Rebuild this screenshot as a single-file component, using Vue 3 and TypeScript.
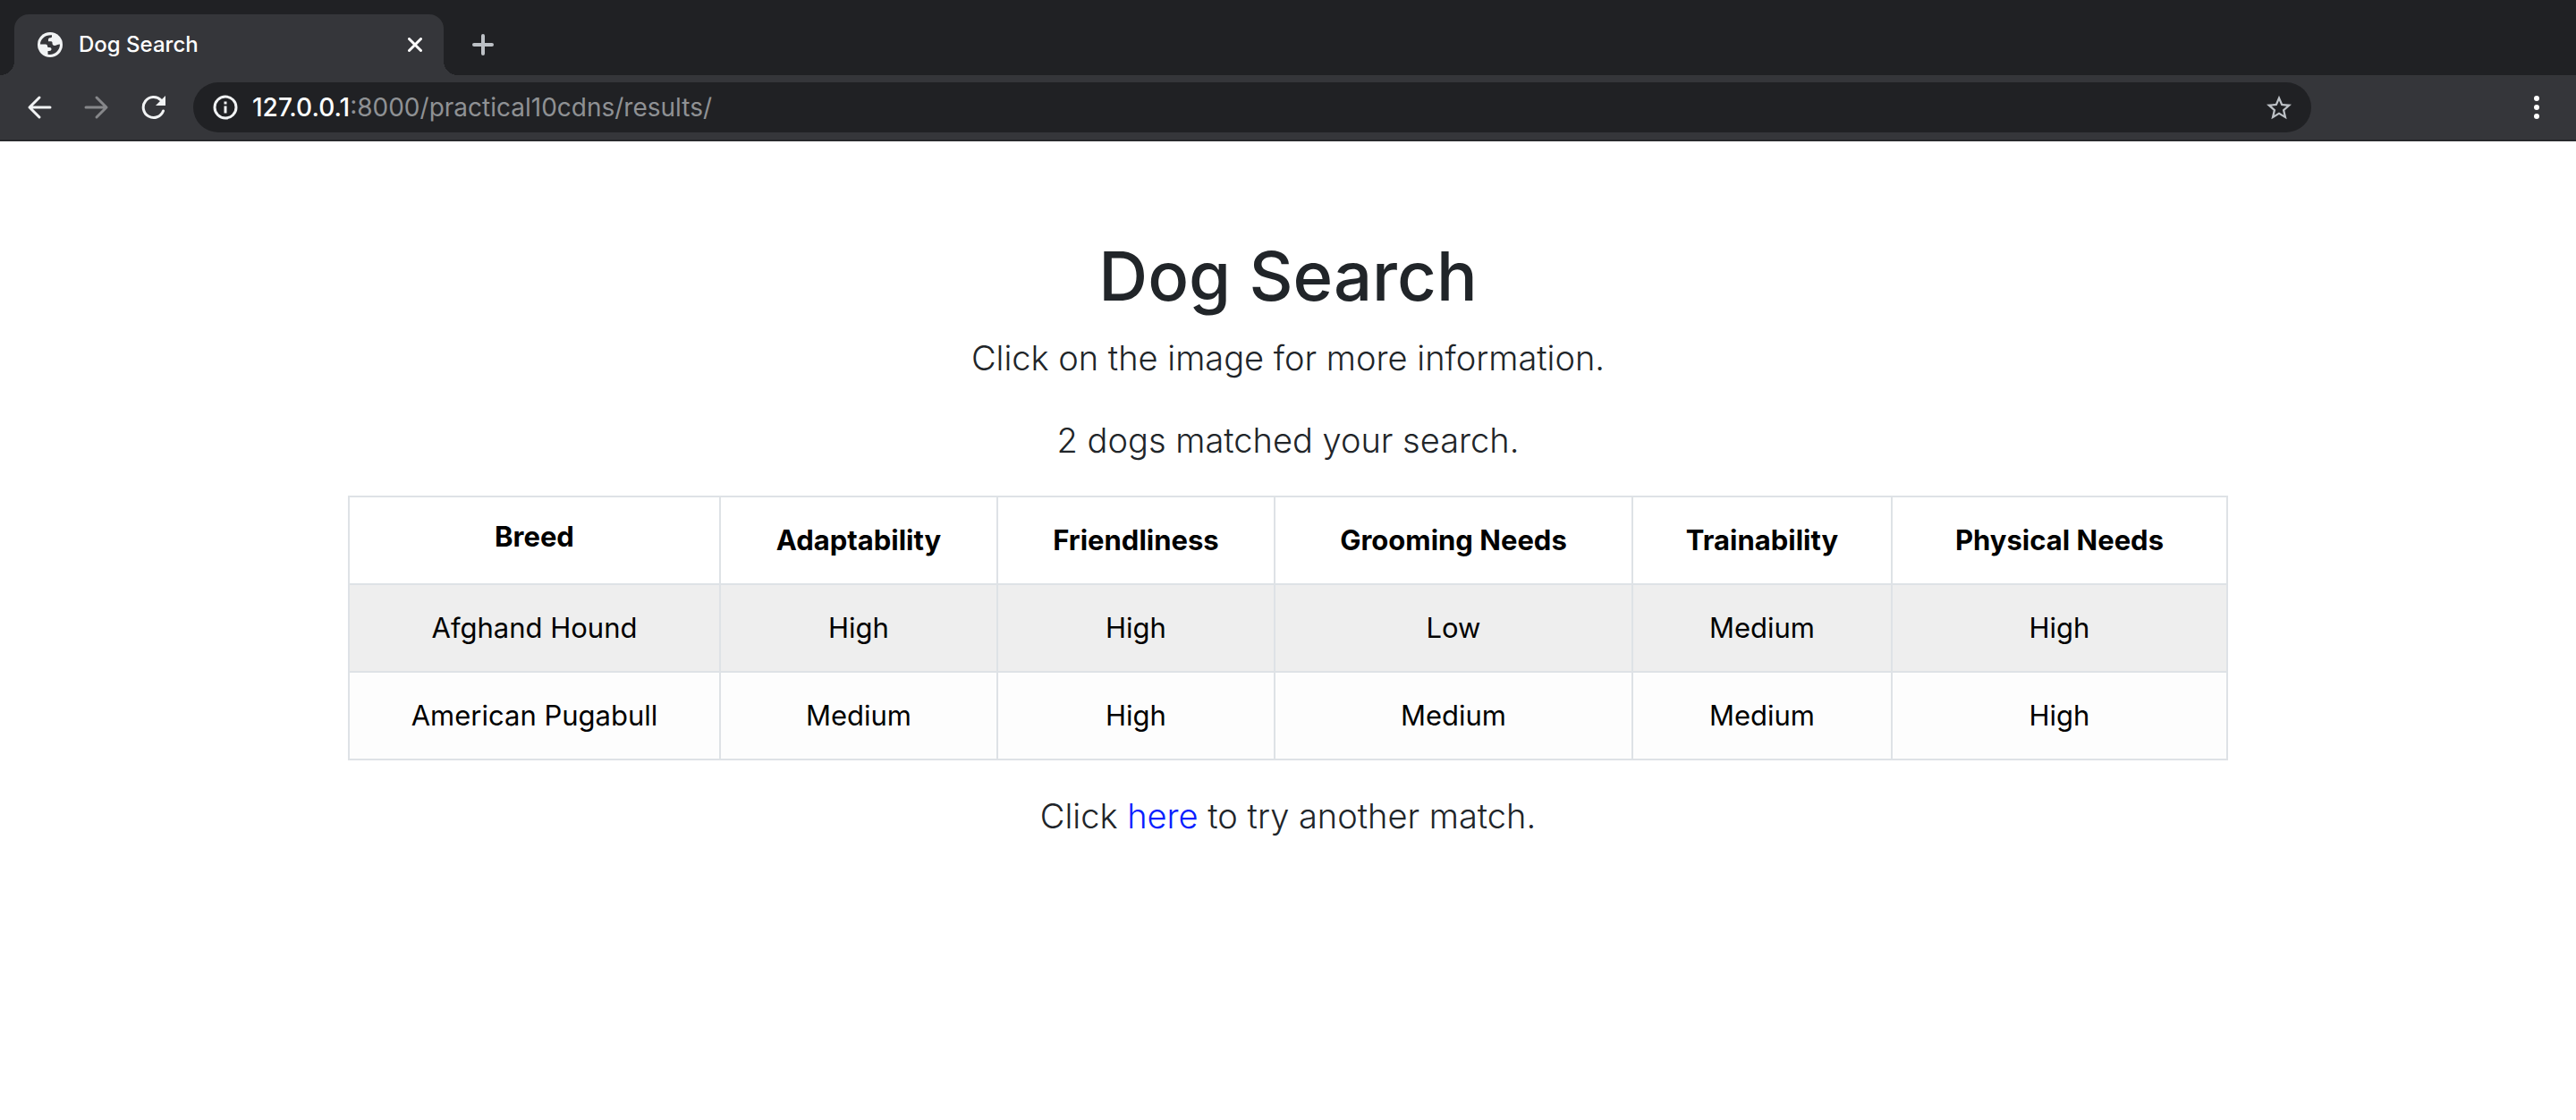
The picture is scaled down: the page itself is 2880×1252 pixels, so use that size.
<script setup lang="ts">
interface Dog {
  breed: string
  traits: string[]
}

const columns: string[] = [
  'Breed',
  'Adaptability',
  'Friendliness',
  'Grooming Needs',
  'Trainability',
  'Physical Needs',
]

const dogs: Dog[] = [
  { breed: 'Afghand Hound', traits: ['High', 'High', 'Low', 'Medium', 'High'] },
  { breed: 'American Pugabull', traits: ['Medium', 'High', 'Medium', 'Medium', 'High'] },
]
</script>

<template>
  <div class="browser">
    <header>
      <div class="tab-strip">
        <div class="tab">
          <svg class="favicon" viewBox="0 0 28 28" aria-hidden="true">
            <circle cx="14" cy="14" r="14" fill="#f1f3f4" />
            <path
              d="M3 13.500C3 8 8 2.800 16 3.200v1.600c0 1-1 1.500-2 1.500c-1.500 0-2 1-2 2v2h3c1.500 0 1.500 1 1.500 2c0 1.700 1 2.700 2.500 2.700c2 0 3-1.500 6-1.500c0 7-6 12.500-13.500 11.200V21H13c1.500 0 2.500-.8 2.500-2c0-1.300-.8-2-2-2h-1c-1 0-1.500-.6-1.500-1.500c0-1.300-.7-2-2-2z"
              fill="#35363a"
            />
          </svg>
          <span class="tab-title">Dog Search</span>
          <button class="icon-button close" type="button" aria-label="Close tab">
            <svg viewBox="0 0 16 16"><path d="M1.500 1.500l13 13M14.500 1.500l-13 13" stroke="#fff" stroke-width="3" stroke-linecap="round" /></svg>
          </button>
        </div>
        <button class="icon-button new-tab" type="button" aria-label="New tab">
          <svg viewBox="0 0 24 24"><path d="M12 2v20M2 12h20" stroke="#bdc1c6" stroke-width="4" stroke-linecap="round" /></svg>
        </button>
      </div>

      <nav class="toolbar" aria-label="Browser toolbar">
        <button class="icon-button" type="button" aria-label="Back">
          <svg viewBox="0 0 28 28" fill="none" stroke="#f1f3f4" stroke-width="3" stroke-linecap="round" stroke-linejoin="round"><path d="M14 3L3 14l11 11M3 14h23" /></svg>
        </button>
        <button class="icon-button" type="button" aria-label="Forward" disabled>
          <svg viewBox="0 0 28 28" fill="none" stroke="#86878a" stroke-width="3" stroke-linecap="round" stroke-linejoin="round"><path d="M14 3l11 11l-11 11M25 14H2" /></svg>
        </button>
        <button class="icon-button" type="button" aria-label="Reload">
          <svg viewBox="0 0 28 28"><path d="M24.500 18A11.500 11.500 0 1 1 22 6" fill="none" stroke="#f1f3f4" stroke-width="3" stroke-linecap="round" /><path d="M27 1v11H16z" fill="#f1f3f4" /></svg>
        </button>
        <div class="omnibox">
          <svg class="info" viewBox="0 0 28 28" aria-hidden="true">
            <circle cx="14" cy="14" r="12" fill="none" stroke="#f1f3f4" stroke-width="3" />
            <path d="M12.500 12.500h3v8h-3zM12.500 7.500h3v3h-3z" fill="#f1f3f4" />
          </svg>
          <label class="host" for="address">127.0.0.1</label>
          <input id="address" class="path" type="text" value=":8000/practical10cdns/results/" spellcheck="false" />
          <button class="icon-button" type="button" aria-label="Bookmark this page">
            <svg viewBox="2 2 20 19"><path fill="#bdc1c6" d="M22 9.240l-7.190-.62L12 2 9.190 8.630 2 9.240l5.460 4.730L5.820 21 12 17.270 18.180 21l-1.630-7.030L22 9.240zM12 15.400l-3.760 2.270 1-4.280-3.320-2.880 4.380-.38L12 6.100l1.710 4.040 4.380.38-3.320 2.880 1 4.280L12 15.400z" /></svg>
          </button>
        </div>
        <button class="icon-button" type="button" aria-label="Menu">
          <svg viewBox="0 0 28 28" fill="#fff"><circle cx="14" cy="4" r="3" /><circle cx="14" cy="14" r="3" /><circle cx="14" cy="24" r="3" /></svg>
        </button>
      </nav>
    </header>

    <main>
      <h1>Dog Search</h1>
      <p>Click on the image for more information.</p>
      <p>{{ dogs.length }} dogs matched your search.</p>
      <table>
        <colgroup>
          <col class="col-breed" />
          <col class="col-adapt" />
          <col class="col-friend" />
          <col class="col-groom" />
          <col class="col-train" />
          <col class="col-phys" />
        </colgroup>
        <thead>
          <tr>
            <th v-for="column in columns" :key="column" scope="col">{{ column }}</th>
          </tr>
        </thead>
        <tbody>
          <tr v-for="dog in dogs" :key="dog.breed">
            <td>{{ dog.breed }}</td>
            <td v-for="(trait, i) in dog.traits" :key="i">{{ trait }}</td>
          </tr>
        </tbody>
      </table>
      <p>Click <a href="#">here</a> to try another match.</p>
    </main>
  </div>
</template>

<style>
body {
  margin: 0;
  background: #fff;
}
</style>

<style scoped>
.browser {
  font-family: Inter, "Liberation Sans", sans-serif;
  color: #212529;
}

.tab-strip {
  display: flex;
  align-items: center;
  height: 84px;
  padding-left: 16px;
  background: #202124;
}

.tab {
  position: relative;
  display: flex;
  align-items: center;
  align-self: flex-end;
  box-sizing: border-box;
  width: 480px;
  height: 68px;
  padding: 0 20px 0 26px;
  border-radius: 16px 16px 0 0;
  background: #35363a;
}

.tab::before,
.tab::after {
  content: "";
  position: absolute;
  bottom: 0;
  width: 16px;
  height: 16px;
}

.tab::before {
  right: 100%;
  background: radial-gradient(circle at 0 0, #202124 16px, #35363a 16px);
}

.tab::after {
  left: 100%;
  background: radial-gradient(circle at 100% 0, #202124 16px, #35363a 16px);
}

.favicon {
  width: 28px;
  height: 28px;
}

.tab-title {
  flex: 1;
  margin-left: 18px;
  color: #fff;
  font-size: 24px;
  font-weight: 500;
  line-height: 32px;
}

.icon-button {
  display: flex;
  flex: none;
  align-items: center;
  justify-content: center;
  width: 28px;
  height: 28px;
  padding: 0;
  border: 0;
  background: none;
}

.icon-button svg {
  width: 100%;
  height: 100%;
}

.close {
  width: 16px;
  height: 16px;
  margin-right: 4px;
}

.new-tab {
  width: 24px;
  height: 24px;
  margin: 16px 0 0 32px;
}

.toolbar {
  display: flex;
  align-items: center;
  gap: 36px;
  height: 72px;
  padding: 0 30px;
  border-bottom: 2px solid #28292c;
  background: #35363a;
}

.omnibox {
  display: flex;
  flex: 1;
  align-items: center;
  box-sizing: border-box;
  height: 56px;
  margin: 0 202px 0 -6px;
  padding: 0 22px;
  border-radius: 28px;
  background: #202124;
  font-size: 28px;
  line-height: 40px;
}

.info {
  flex: none;
  width: 28px;
  height: 28px;
  margin-right: 16px;
}

.host {
  color: #fff;
  font-weight: 500;
}

.path {
  flex: 1;
  min-width: 0;
  padding: 0;
  border: 0;
  outline: 0;
  background: none;
  color: #8f9194;
  font: inherit;
}

main {
  padding: 104px 32px 32px;
  text-align: center;
}

h1 {
  margin: 0 0 16px;
  font-size: 76px;
  font-weight: 500;
  line-height: 92px;
}

p {
  margin: 0 0 32px;
  font-size: 38px;
  font-weight: 300;
  line-height: 60px;
}

a {
  color: #0a1fff;
  text-decoration: none;
}

table {
  width: 100%;
  max-width: 2100px;
  margin: 0 auto 32px;
  border-collapse: collapse;
  table-layout: fixed;
  color: #000;
  font-size: 31px;
  line-height: 48px;
}

th,
td {
  box-sizing: border-box;
  height: 98px;
  padding: 20px 8px;
  border: 2px solid #dee2e6;
  vertical-align: middle;
}

th {
  font-weight: 700;
}

th:first-child {
  vertical-align: top;
}

tbody tr:nth-child(odd) {
  background: #eee;
}

tbody tr:nth-child(even) {
  background: #fdfdfd;
}

.col-breed {
  width: 415px;
}

.col-adapt,
.col-friend {
  width: 310px;
}

.col-groom {
  width: 400px;
}

.col-train {
  width: 290px;
}

.col-phys {
  width: 375px;
}
</style>
